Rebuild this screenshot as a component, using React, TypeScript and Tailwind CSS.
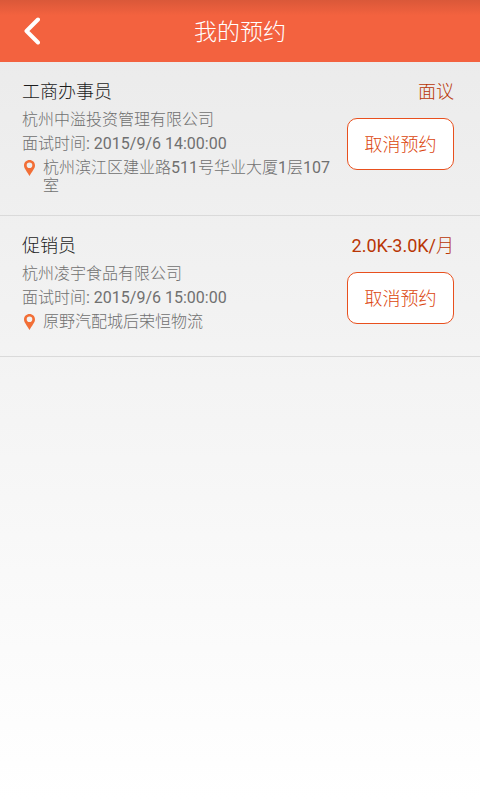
interface Appointment {
  id: number;
  title: string;
  salary: string;
  company: string;
  time: string;
  address: string;
}

const appointments: Appointment[] = [
  {
    id: 1,
    title: '工商办事员',
    salary: '面议',
    company: '杭州中溢投资管理有限公司',
    time: '2015/9/6 14:00:00',
    address: '杭州滨江区建业路511号华业大厦1层107室',
  },
  {
    id: 2,
    title: '促销员',
    salary: '2.0K-3.0K/月',
    company: '杭州凌宇食品有限公司',
    time: '2015/9/6 15:00:00',
    address: '原野汽配城后荣恒物流',
  },
];

// Latin runs are set in regular weight next to the light CJK glyphs
const MixedText = ({ text }: { text: string }) => (
  <>
    {text.split(/([\x20-\x7e]+)/).map((part, i) =>
      i % 2 === 1 ? (
        <span key={i} className="font-normal">{part}</span>
      ) : (
        part
      )
    )}
  </>
);

const PinIcon = () => (
  <svg viewBox="0 0 11 16" className="w-[11px] h-4 shrink-0" aria-hidden="true">
    <path
      fillRule="evenodd"
      fill="#f26f37"
      d="M5.5 0C2.4 0 0 2.4 0 5.4 0 8.700 3.300 11.500 5.500 16 7.700 11.500 11 8.700 11 5.400 11 2.400 8.600 0 5.500 0ZM5.500 2.500A2.800 2.800 0 1 1 5.500 8.100 2.800 2.800 0 0 1 5.500 2.500Z"
    />
  </svg>
);

const AppointmentItem = ({ item }: { item: Appointment }) => (
  <li className="min-h-[141px] pt-[17px] pb-5 pl-[22px] pr-[26px] border-b border-[#dadada]">
    <div className="flex items-center justify-between h-[26px] text-lg">
      <h2 className="text-[#1c1c1c]">{item.title}</h2>
      <span className="text-[#b93605]">
        <MixedText text={item.salary} />
      </span>
    </div>
    <div className="flex items-start gap-1">
      <div className="flex-1 min-w-0 pt-[3px] text-base leading-6 text-[#707070]">
        <p>{item.company}</p>
        <p>
          <MixedText text={`面试时间: ${item.time}`} />
        </p>
        <div className="flex gap-2 pt-[3px] pl-0.5">
          <div className="pt-px">
            <PinIcon />
          </div>
          <p className="leading-[18px]">
            <MixedText text={item.address} />
          </p>
        </div>
      </div>
      <button
        type="button"
        className="shrink-0 w-[107px] h-[52px] mt-[13px] pt-0.5 rounded-[10px] border border-[#e8501e] bg-white text-lg text-[#db440c]"
      >
        取消预约
      </button>
    </div>
  </li>
);

export default function App() {
  return (
    <div className="min-h-screen bg-linear-to-b from-[#eaeaea] to-white font-[Roboto,'Noto_Sans_CJK_SC',sans-serif] font-light">
      <header className="grid grid-cols-[64px_1fr_64px] items-center h-[62px] bg-linear-to-b from-[#da5839] via-[#f3623f] via-25% to-[#f3623f]">
        <button type="button" aria-label="返回" className="h-full pl-6">
          <svg viewBox="0 0 16 28" className="w-4 h-7" fill="none" aria-hidden="true">
            <path
              d="M14 2.500 2.500 14 14 25.500"
              stroke="#fff"
              strokeWidth="4"
              strokeLinecap="round"
              strokeLinejoin="round"
            />
          </svg>
        </button>
        <h1 className="pt-1 text-center text-[23px] text-white">我的预约</h1>
      </header>
      <ul>
        {appointments.map((item) => (
          <AppointmentItem key={item.id} item={item} />
        ))}
      </ul>
    </div>
  );
}
